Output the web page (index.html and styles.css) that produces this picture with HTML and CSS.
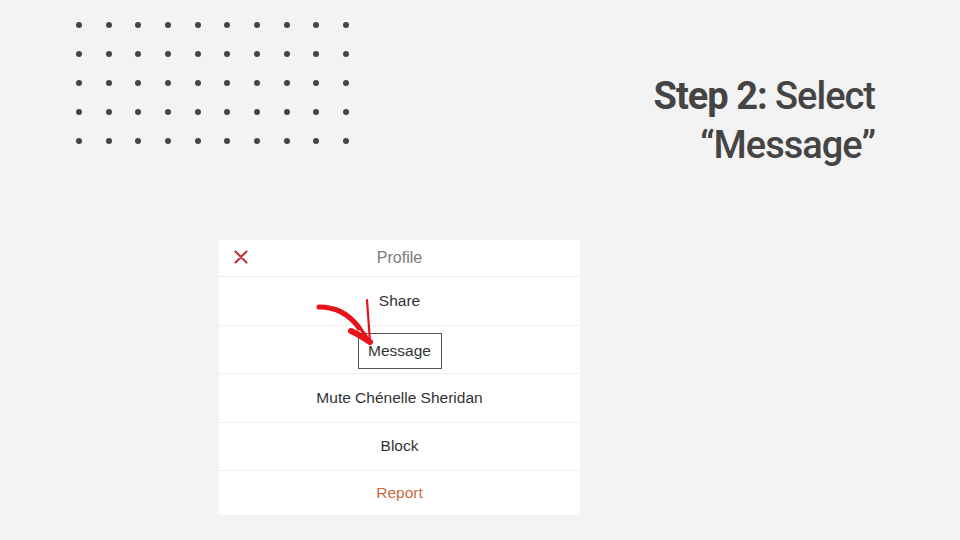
FILE: index.html
```html
<!DOCTYPE html>
<html lang="en">
<head>
  <meta charset="UTF-8">
  <meta name="viewport" content="width=device-width, initial-scale=1.0">
  <title>Step 2: Select Message</title>
  <link rel="stylesheet" href="styles.css">
</head>
<body>
  <div class="slide">
    <div class="top">
      <div class="dots">
        <span></span><span></span><span></span><span></span><span></span><span></span><span></span><span></span><span></span><span></span>
        <span></span><span></span><span></span><span></span><span></span><span></span><span></span><span></span><span></span><span></span>
        <span></span><span></span><span></span><span></span><span></span><span></span><span></span><span></span><span></span><span></span>
        <span></span><span></span><span></span><span></span><span></span><span></span><span></span><span></span><span></span><span></span>
        <span></span><span></span><span></span><span></span><span></span><span></span><span></span><span></span><span></span><span></span>
      </div>
      <h1 class="title"><strong>Step 2:</strong> Select<br>“Message”</h1>
    </div>

    <div class="sheet">
      <div class="sheet-head">
        <svg class="close" width="14" height="14" viewBox="0 0 14 14">
          <path d="M1.5 1.5 L12.5 12.5 M12.5 1.5 L1.5 12.5" stroke="#c0393b" stroke-width="2.2" stroke-linecap="round"/>
        </svg>
        <span>Profile</span>
      </div>
      <div class="row">Share</div>
      <div class="row"><span class="boxed">Message</span></div>
      <div class="row">Mute Chénelle Sheridan</div>
      <div class="row">Block</div>
      <div class="row last report">Report</div>

      <!-- hand-drawn arrow pointing at Message -->
      <svg class="arrow" width="70" height="60" viewBox="0 0 70 60">
        <path d="M8 13 C24 12 40 19 52 38 L59 48" stroke="#e8121b" stroke-width="3.2" fill="none" stroke-linecap="round"/>
        <path d="M8 13 C24 13 38 20 48 34" stroke="#e8121b" stroke-width="5" fill="none" stroke-linecap="round"/>
        <path d="M40 37 C47 40 53 44 59 48" stroke="#e8121b" stroke-width="6" fill="none" stroke-linecap="round"/>
        <path d="M56 6 C57 20 58 34 59 48" stroke="#e8121b" stroke-width="2.2" fill="none" stroke-linecap="round"/>
      </svg>
    </div>
  </div>
</body>
</html>
```

FILE: styles.css
```css
body {
  margin: 0;
  padding: 0;
  background-color: #f3f3f3;
  font-family: "Liberation Sans", Arial, sans-serif;
}

.slide {
  width: 960px;
  height: 540px;
  overflow: hidden;
}

.top {
  display: flex;
  justify-content: space-between;
  align-items: flex-start;
  padding: 21px 85px 0 76px;
  height: 219px;
}

.dots {
  display: grid;
  grid-template-columns: repeat(10, 6px);
  column-gap: 23.67px;
  row-gap: 23px;
  padding-top: 1px;
}

.dots span {
  width: 6px;
  height: 6px;
  border-radius: 50%;
  background-color: #454545;
}

.title {
  margin: 51px 0 0 0;
  text-align: right;
  font-family: "Roboto", "Liberation Sans", sans-serif;
  font-size: 38px;
  line-height: 49px;
  font-weight: 500;
  letter-spacing: -1px;
  color: #444;
}

.title strong {
  font-weight: 700;
}

.sheet {
  position: relative;
  width: 361px;
  margin-left: 219px;
  background-color: #fff;
}

.sheet-head {
  height: 36px;
  display: flex;
  align-items: center;
  justify-content: center;
  border-bottom: 1px solid #ececec;
  position: relative;
  font-size: 16px;
  color: #7a7a7a;
}

.close {
  position: absolute;
  left: 15px;
  top: 10px;
}

.row {
  height: 47.5px;
  display: flex;
  align-items: center;
  justify-content: center;
  border-bottom: 1px solid #eeeeee;
  font-size: 15.5px;
  color: #333;
}

.row.last {
  height: 44px;
  border-bottom: none;
}

.report {
  color: #cc6a3e;
}

.boxed {
  display: flex;
  align-items: center;
  justify-content: center;
  width: 82px;
  height: 34px;
  margin-top: 3px;
  border: 1px solid #555;
}

.arrow {
  position: absolute;
  left: 92px;
  top: 54px;
}
```
